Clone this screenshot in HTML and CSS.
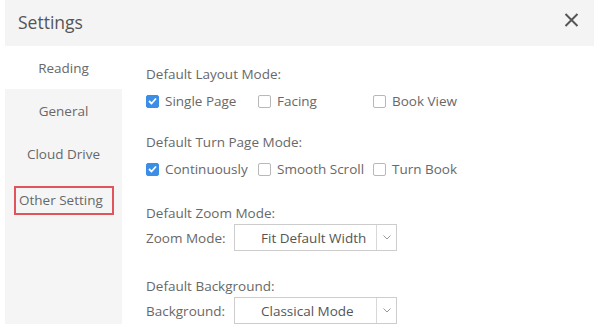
FILE: index.html
```html
<!DOCTYPE html>
<html lang="en">
  <head>
    <meta charset="UTF-8" />
    <meta name="viewport" content="width=device-width, initial-scale=1.0" />
    <title>Settings</title>
    <link rel="stylesheet" href="styles.css">
  </head>
  <body>
    <div class="dialog">
      <div class="header">
        <span class="title">Settings</span>
        <svg class="close" width="15" height="14" viewBox="0 0 15 14">
          <path d="M1.5 1 L13.5 13 M13.5 1 L1.5 13" stroke="#555" stroke-width="2" fill="none" />
        </svg>
      </div>

      <div class="main">
        <!-- left menu -->
        <div class="sidebar">
          <div class="menu-item active">Reading</div>
          <div class="menu-item">General</div>
          <div class="menu-item">Cloud Drive</div>
          <div class="menu-item"><span class="marked">Other Setting</span></div>
        </div>

        <div class="content">
          <div class="section">
            <div class="section-title">Default Layout Mode:</div>
            <div class="options">
              <label class="option"><span class="box checked"><svg width="9" height="8" viewBox="0 0 9 8"><path d="M1 4 L3.5 6.5 L8 1.5" stroke="#fff" stroke-width="1.8" fill="none" /></svg></span>Single Page</label>
              <label class="option"><span class="box"></span>Facing</label>
              <label class="option"><span class="box"></span>Book View</label>
            </div>
          </div>

          <div class="section">
            <div class="section-title">Default Turn Page Mode:</div>
            <div class="options">
              <label class="option"><span class="box checked"><svg width="9" height="8" viewBox="0 0 9 8"><path d="M1 4 L3.5 6.5 L8 1.5" stroke="#fff" stroke-width="1.8" fill="none" /></svg></span>Continuously</label>
              <label class="option"><span class="box"></span>Smooth Scroll</label>
              <label class="option"><span class="box"></span>Turn Book</label>
            </div>
          </div>

          <div class="section select-section">
            <div class="section-title">Default Zoom Mode:</div>
            <div class="select-row">
              <span class="select-label">Zoom Mode:</span>
              <div class="select">
                <span class="select-value">Fit Default Width</span>
                <span class="select-arrow"><svg width="8" height="5" viewBox="0 0 8 5"><path d="M0.5 0.5 L4 4 L7.5 0.5" stroke="#999" stroke-width="1" fill="none" /></svg></span>
              </div>
            </div>
          </div>

          <div class="section select-section last">
            <div class="section-title">Default Background:</div>
            <div class="select-row">
              <span class="select-label">Background:</span>
              <div class="select">
                <span class="select-value">Classical Mode</span>
                <span class="select-arrow"><svg width="8" height="5" viewBox="0 0 8 5"><path d="M0.5 0.5 L4 4 L7.5 0.5" stroke="#999" stroke-width="1" fill="none" /></svg></span>
              </div>
            </div>
          </div>
        </div>
      </div>
    </div>
  </body>
</html>
```

FILE: styles.css
```css
body {
  margin: 0;
  padding-left: 5px;
  background: #fff;
  font-family: "Open Sans", "Noto Sans", sans-serif;
  color: #686868;
  overflow: hidden;
}

.dialog {
  height: 324px;
  display: flex;
  flex-direction: column;
}

.header {
  height: 46px;
  flex: none;
  background-color: #f4f4f4;
  display: flex;
  align-items: center;
  justify-content: space-between;
  padding: 0 15px 0 13px;
}

.title {
  font-size: 17.5px;
  color: #555;
  margin-top: -2px;
}

.close {
  margin-top: -7px;
}

.main {
  flex: 1;
  display: flex;
}

.sidebar {
  width: 117px;
  flex: none;
  background-color: #f5f5f5;
}

.menu-item {
  height: 43px;
  display: flex;
  align-items: center;
  justify-content: center;
  font-size: 13.5px;
  color: #686868;
}

.menu-item.active {
  background-color: #fff;
}

.marked {
  display: block;
  width: 93px;
  height: 25px;
  line-height: 25px;
  box-sizing: content-box;
  border: 2px solid #e2545c;
  padding-left: 3px;
  margin: 7px 0 0 1px;
  white-space: nowrap;
}

.content {
  padding: 18px 0 0 24px;
  font-size: 13.5px;
}

.section + .section {
  margin-top: 21px;
}

.section.select-section {
  margin-top: 24px;
}

.section.last {
  margin-top: 25px;
}

.section-title {
  line-height: 20px;
}

.options {
  display: grid;
  grid-template-columns: 112px 115px auto;
  margin-top: 7px;
  height: 20px;
}

.option {
  display: flex;
  align-items: center;
  line-height: 20px;
  white-space: nowrap;
}

.box {
  width: 11px;
  height: 11px;
  border: 1px solid #b8b8b8;
  border-radius: 2px;
  background-color: #fff;
  margin-right: 6px;
  display: flex;
  align-items: center;
  justify-content: center;
}

.box.checked {
  background-color: #3b8de6;
  border-color: #3b8de6;
}

.select-row {
  display: flex;
  align-items: center;
  margin-top: 1px;
}

.select-label {
  width: 88px;
}

.select {
  width: 161px;
  height: 25px;
  border: 1px solid #cdcdcd;
  display: flex;
  align-items: center;
}

.select-value {
  flex: 1;
  padding-left: 26px;
  color: #555;
}

.select-arrow {
  width: 19px;
  height: 100%;
  border-left: 1px solid #d8d8d8;
  display: flex;
  align-items: center;
  justify-content: center;
}
```
